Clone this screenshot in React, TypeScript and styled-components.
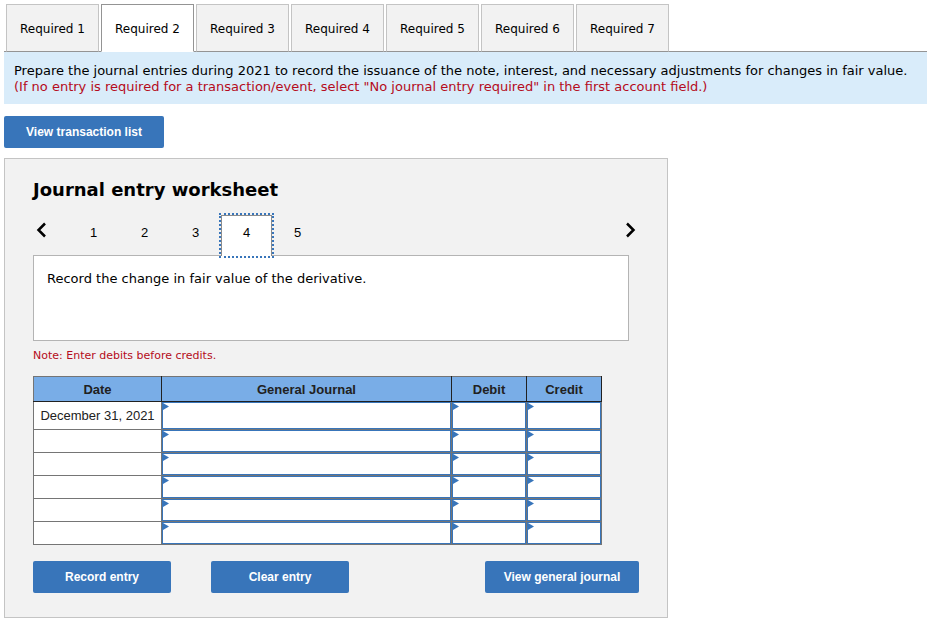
import React, { useState } from "react";
import styled, { createGlobalStyle } from "styled-components";

const verdana = `Verdana, "DejaVu Sans", sans-serif`;
const arial = `Arial, "Liberation Sans", sans-serif`;
const blue = "#3875ba";

const GlobalStyle = createGlobalStyle`
  *, *::before, *::after { box-sizing: border-box; }
  body { margin: 0; background: #fff; color: #000; font-family: ${verdana}; font-size: 13px; }
`;

const Page = styled.main`
  padding: 4px 10px 9px 4px;
`;

const Tabs = styled.nav`
  display: flex;
  gap: 2px;
  padding-left: 2px;
  border-bottom: 1px solid #949494;
`;

const Tab = styled.button<{ $active: boolean }>`
  width: 93px;
  height: 48px;
  margin-bottom: -1px;
  padding: 2px 0 0;
  border: 1px solid ${(p) => (p.$active ? "#949494" : "#c4c4c4")};
  border-bottom-color: ${(p) => (p.$active ? "#fff" : "#949494")};
  background: ${(p) => (p.$active ? "#fff" : "#f2f2f2")};
  color: #000;
  font-family: ${verdana};
  font-size: 12px;
  white-space: nowrap;
`;

const Instructions = styled.p`
  margin: 0;
  padding: 11px 10px 9px;
  background: #d9ecfa;
  line-height: 16px;
`;

const Hint = styled.span`
  display: block;
  color: #b50b20;
`;

const Button = styled.button<{ $width: number }>`
  width: ${(p) => p.$width}px;
  height: 32px;
  padding: 0;
  border: 0;
  border-radius: 2px;
  background: ${blue};
  color: #fff;
  font: bold 12px ${arial};
`;

const ListBar = styled.div`
  display: flex;
  padding: 12px 0 10px;
`;

const Worksheet = styled.section`
  max-width: 664px;
  padding: 19px 28px 24px;
  border: 1px solid #c4c4c4;
  background: #f2f2f2;
`;

const Title = styled.h1`
  margin: 0;
  font-size: 18px;
  line-height: 24px;
`;

const Stepper = styled.div`
  display: flex;
  align-items: flex-start;
  margin-top: 13px;
`;

const Steps = styled.div`
  display: flex;
  flex: 1;
  padding-left: 18px;
`;

const Arrow = styled.button`
  display: flex;
  align-items: center;
  justify-content: center;
  width: 17px;
  height: 30px;
  padding: 0;
  border: 0;
  background: none;
`;

const Step = styled.button<{ $active: boolean }>`
  width: 51px;
  height: 41px;
  padding: 0 0 8px;
  border: 1px solid ${(p) => (p.$active ? "#8c8c8c" : "transparent")};
  border-bottom: 0;
  outline: ${(p) => (p.$active ? `2px dotted ${blue}` : "none")};
  background: ${(p) => (p.$active ? "#fff" : "transparent")};
  color: #000;
  font: 13px ${arial};
`;

const Description = styled.div`
  min-height: 86px;
  margin: -1px 10px 0 0;
  padding: 15px 13px;
  border: 1px solid #b4b4b4;
  background: #fff;
  line-height: 16px;
`;

const Note = styled.p`
  margin: 7px 0 12px;
  color: #b50b20;
  font-size: 11px;
  line-height: 16px;
`;

const Journal = styled.table`
  width: 100%;
  max-width: 569px;
  border-collapse: collapse;
  table-layout: fixed;
  font: 13px ${arial};
  color: #212121;
`;

const HeadCell = styled.th<{ $width?: number }>`
  width: ${(p) => (p.$width ? `${p.$width}px` : "auto")};
  height: 25px;
  padding: 0;
  border: 1px solid #212121;
  border-top-color: #757575;
  background: #79ade7;

  &:first-child { border-left-color: #757575; }
`;

const Cell = styled.td`
  position: relative;
  padding: 0;
  border: 1px solid #757575;
  background: #fff;
  text-align: center;
  white-space: nowrap;
`;

const BodyRow = styled.tr<{ $tall: boolean }>`
  height: ${(p) => (p.$tall ? 28 : 23)}px;

  input { height: ${(p) => (p.$tall ? 27 : 22)}px; }
`;

const EntryInput = styled.input`
  display: block;
  width: 100%;
  margin: 0;
  padding: 0 6px;
  border: 1px solid ${blue};
  border-radius: 0;
  outline: 0;
  background: #fff;
  font: 13px ${arial};
`;

const Marker = styled.svg`
  position: absolute;
  top: 1px;
  left: 1px;
  display: block;
  pointer-events: none;
`;

const Actions = styled.div`
  display: flex;
  gap: 40px;
  margin-top: 16px;

  & > :last-child { margin-left: auto; }
`;

const requirements = [1, 2, 3, 4, 5, 6, 7];
const steps = [1, 2, 3, 4, 5];
const dates = ["December 31, 2021", "", "", "", "", ""];
const fields = ["General Journal", "Debit", "Credit"];

function Chevron({ points }: { points: string }) {
  return (
    <svg width="13" height="16" viewBox="0 0 13 16" fill="none" stroke="#000" strokeWidth="2.5" aria-hidden="true">
      <polyline points={points} />
    </svg>
  );
}

export default function App() {
  const [tab, setTab] = useState(2);
  const [step, setStep] = useState(4);

  return (
    <Page>
      <GlobalStyle />
      <Tabs>
        {requirements.map((n) => (
          <Tab key={n} $active={n === tab} onClick={() => setTab(n)}>
            Required {n}
          </Tab>
        ))}
      </Tabs>
      <Instructions>
        Prepare the journal entries during 2021 to record the issuance of the note, interest, and necessary adjustments
        for changes in fair value.
        <Hint>
          (If no entry is required for a transaction/event, select "No journal entry required" in the first account
          field.)
        </Hint>
      </Instructions>
      <ListBar>
        <Button $width={160}>View transaction list</Button>
      </ListBar>
      <Worksheet>
        <Title>Journal entry worksheet</Title>
        <Stepper>
          <Arrow aria-label="Previous entry" onClick={() => setStep(Math.max(1, step - 1))}>
            <Chevron points="10,1.5 3.5,8 10,14.5" />
          </Arrow>
          <Steps>
            {steps.map((n) => (
              <Step key={n} $active={n === step} onClick={() => setStep(n)}>
                {n}
              </Step>
            ))}
          </Steps>
          <Arrow aria-label="Next entry" onClick={() => setStep(Math.min(5, step + 1))}>
            <Chevron points="3,1.5 9.5,8 3,14.5" />
          </Arrow>
        </Stepper>
        <Description>Record the change in fair value of the derivative.</Description>
        <Note>Note: Enter debits before credits.</Note>
        <Journal>
          <thead>
            <tr>
              <HeadCell $width={128}>Date</HeadCell>
              <HeadCell>General Journal</HeadCell>
              <HeadCell $width={75}>Debit</HeadCell>
              <HeadCell $width={75}>Credit</HeadCell>
            </tr>
          </thead>
          <tbody>
            {dates.map((date, row) => (
              <BodyRow key={row} $tall={row === 0}>
                <Cell>{date}</Cell>
                {fields.map((field) => (
                  <Cell key={field}>
                    <EntryInput aria-label={`${field}, line ${row + 1}`} />
                    <Marker width="6" height="7" viewBox="0 0 6 7" aria-hidden="true">
                      <path d="M0 0L6 3.5L0 7Z" fill={blue} />
                    </Marker>
                  </Cell>
                ))}
              </BodyRow>
            ))}
          </tbody>
        </Journal>
        <Actions>
          <Button $width={138}>Record entry</Button>
          <Button $width={138}>Clear entry</Button>
          <Button $width={154}>View general journal</Button>
        </Actions>
      </Worksheet>
    </Page>
  );
}
